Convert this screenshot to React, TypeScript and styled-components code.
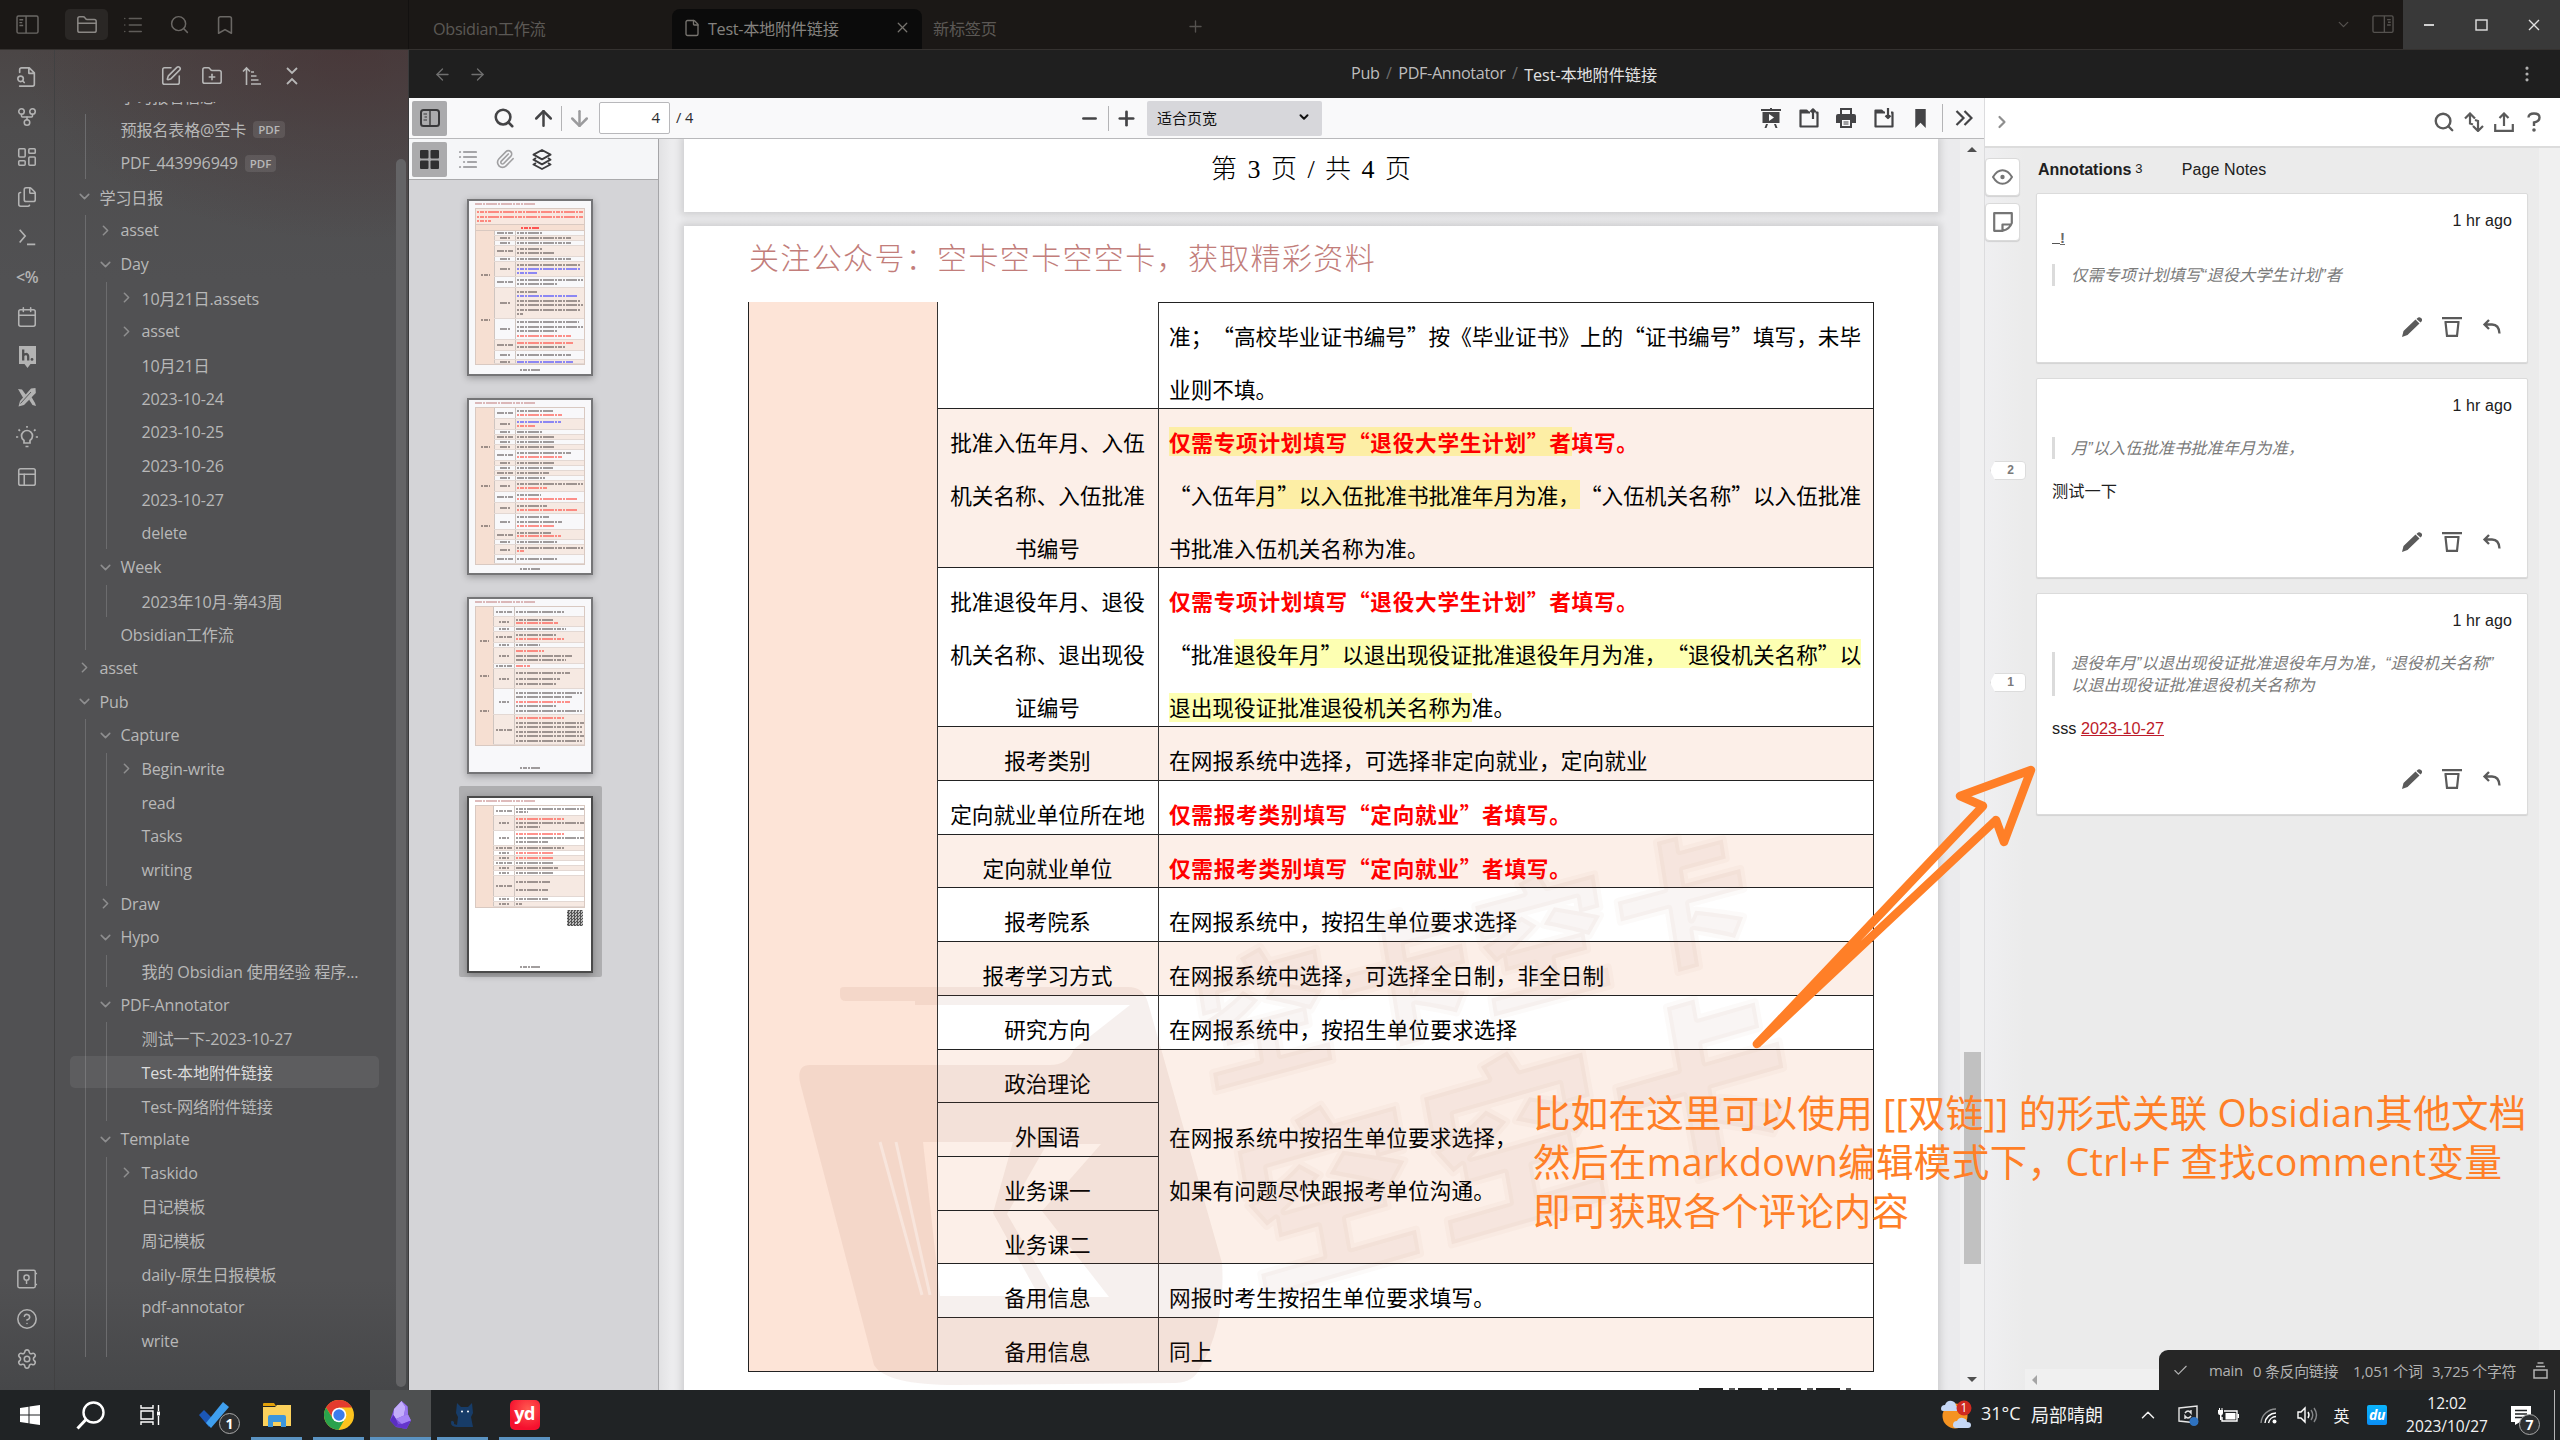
import React from 'react';
import styled, { createGlobalStyle, css } from 'styled-components';
import {
  FolderClosed, List, Search, Bookmark, File, X, Plus, ChevronDown, ChevronRight, ArrowLeft, ArrowRight, ArrowUp, ArrowDown,
  SquarePen, FolderPlus, GitFork, LayoutDashboard, Files, Calendar, PanelsTopLeft,
  CircleHelp, Settings, Paperclip, Check, MoreVertical, Minus, ChevronUp,
} from 'lucide-react';

const UI = `'Open Sans', 'Noto Sans CJK SC', sans-serif`;
const ARIAL = `'Liberation Sans', 'Noto Sans CJK SC', sans-serif`;
const DOC = `'Noto Sans CJK SC', sans-serif`;
const ORANGE = '#ff7f27';

const Global = createGlobalStyle`
  html, body { margin: 0; padding: 0; background: #202325; }
  * { box-sizing: border-box; }
  body { font-family: ${UI}; text-spacing-trim: space-all; text-autospace: no-autospace; overflow: hidden; }
  svg { display: block; flex: none; }
`;

/* ---------- shared pieces ---------- */

const Screen = styled.div`
  position: relative;
  width: 2560px;
  height: 1440px;
  display: flex;
  flex-direction: column;
  overflow: hidden;
`;

const Slot = styled.div<{ $w: number; $ml?: number; $h?: number; $bg?: string; $c?: string; $r?: number }>`
  flex: none;
  display: flex;
  align-items: center;
  justify-content: center;
  width: ${p => p.$w}px;
  height: ${p => (p.$h ? `${p.$h}px` : 'auto')};
  margin-left: ${p => p.$ml ?? 0}px;
  background: ${p => p.$bg ?? 'transparent'};
  border-radius: ${p => p.$r ?? 0}px;
  color: ${p => p.$c ?? 'inherit'};
`;

const Divider = styled.div<{ $h: number; $ml?: number }>`
  flex: none;
  width: 1px;
  height: ${p => p.$h}px;
  margin-left: ${p => p.$ml ?? 0}px;
  background: #b4b4b6;
`;

const Spacer = styled.div`flex: 1;`;

/* ---------- window title bar ---------- */

const TitleBar = styled.header`
  flex: none;
  height: 50px;
  display: flex;
  background: #1b1816;
  border-bottom: 1px solid #353230;
  color: #55524f;
`;

const TitleLeft = styled.div`
  width: 409px;
  display: flex;
  align-items: center;
  border-right: 1px solid #131110;
`;

const Tabs = styled.div`
  flex: 1;
  display: flex;
  align-items: flex-end;
  font-size: 16.2px;
`;

const Tab = styled.div<{ $w: number; $pad: number; $active?: boolean }>`
  width: ${p => p.$w}px;
  height: 40px;
  display: flex;
  align-items: center;
  padding: 0 0 3px ${p => p.$pad}px;
  letter-spacing: -0.3px;
  white-space: nowrap;
  color: ${p => (p.$active ? '#85827f' : '#5b5855')};
  background: ${p => (p.$active ? '#0b0b0b' : 'transparent')};
  border-radius: 8px 8px 0 0;
  svg { color: ${p => (p.$active ? '#77746f' : 'inherit')}; }
`;

const TabLabel = styled.span`margin-left: 7px; flex: 1;`;

const WindowControls = styled.div`
  width: 157px;
  height: 49px;
  display: flex;
  align-items: center;
  background: #393939;
  color: #dedede;
`;

const PanelIcon = ({ flip, s = 23, c = 'currentColor' }: { flip?: boolean; s?: number; c?: string }) => (
  <svg width={s} height={s * 0.83} viewBox="0 0 24 20" fill="none" stroke={c} strokeWidth="1.5" transform={flip ? 'scale(-1 1)' : undefined}>
    <rect x="1" y="1" width="22" height="18" rx="1.5" />
    <path d="M10.5 1v18M3.5 5h4M3.5 8h3M3.5 11h4" />
  </svg>
);

/* ---------- workspace ---------- */

const Workspace = styled.div`
  flex: none;
  height: 1340px;
  display: flex;
`;

const LeftDock = styled.div`
  width: 409px;
  display: flex;
  background:
    radial-gradient(ellipse 330px 190px at 350px 0, rgba(70, 48, 50, 0.62), transparent),
    linear-gradient(180deg, #4b4646 0, #4e4d4e 80px, #515153 230px, #515153 1230px, #464749 1340px);
  border-right: 1px solid #3a3a3b;
  color: #b7b7b7;
`;

const Ribbon = styled.nav`
  width: 55px;
  padding: 6.5px 0 11px;
  display: flex;
  flex-direction: column;
  border-right: 1px solid #414142;
  color: #b3b3b3;
`;

const RibbonButton = styled.div`
  height: 40px;
  display: flex;
  align-items: center;
  justify-content: center;
  font: 600 16px ${UI};
  letter-spacing: -0.5px;
`;

const Explorer = styled.div`
  flex: 1;
  display: flex;
  flex-direction: column;
  padding-left: 15px;
`;

const ExplorerTools = styled.div`
  height: 52px;
  display: flex;
  align-items: center;
  padding-left: 81px;
`;

const ExplorerBody = styled.div`
  flex: 1;
  display: flex;
  justify-content: space-between;
  overflow: hidden;
`;

const Tree = styled.div`
  width: 309px;
  overflow: hidden;
`;

const ExplorerScroll = styled.div`
  width: 10px;
  height: 1228px;
  margin: 57px 2px 0 0;
  border-radius: 5px;
  background: #646466;
`;

const Row = styled.div<{ $depth: number; $selected?: boolean }>`
  height: 31.67px;
  margin-bottom: 2px;
  margin-left: ${p => -21 * p.$depth}px;
  padding-left: ${p => 7.5 + 21 * p.$depth}px;
  display: flex;
  align-items: center;
  font-size: 16.1px;
  letter-spacing: -0.18px;
  white-space: nowrap;
  border-radius: 5px;
  color: ${p => (p.$selected ? '#dcdcdc' : '#b8b8b8')};
  background: ${p => (p.$selected ? 'rgba(255,255,255,0.075)' : 'transparent')};
`;

const ClippedRow = styled(Row)`margin-top: -22px;`;

const Chevron = styled.div`
  width: 14px;
  margin-right: 8px;
  color: #8e8e8f;
  display: flex;
  justify-content: center;
`;

const Group = styled.div`
  margin-left: 15px;
  padding-left: 5px;
  border-left: 1px solid #6c6c6e;
  margin-bottom: 2px;
  > *:last-child { margin-bottom: 0; }
`;

const FirstGroup = styled(Group)`margin-top: 1.5px;`;

const Badge = styled.span`
  margin-left: 7px;
  padding: 0 5px;
  height: 17px;
  line-height: 17px;
  border-radius: 4px;
  background: rgba(255, 255, 255, 0.1);
  font-size: 11.5px;
  font-weight: 600;
  letter-spacing: 0;
`;

type Node = { name: string; open?: boolean; closed?: boolean; pdf?: boolean; selected?: boolean; kids?: Node[] };

const leaf = (name: string): Node => ({ name });

const tree: Node[] = [
  {
    name: '学习日报', open: true, kids: [
      { name: 'asset', closed: true },
      {
        name: 'Day', open: true, kids: [
          { name: '10月21日.assets', closed: true },
          { name: 'asset', closed: true },
          leaf('10月21日'), leaf('2023-10-24'), leaf('2023-10-25'), leaf('2023-10-26'), leaf('2023-10-27'), leaf('delete'),
        ],
      },
      { name: 'Week', open: true, kids: [leaf('2023年10月-第43周')] },
      leaf('Obsidian工作流'),
    ],
  },
  { name: 'asset', closed: true },
  {
    name: 'Pub', open: true, kids: [
      { name: 'Capture', open: true, kids: [{ name: 'Begin-write', closed: true }, leaf('read'), leaf('Tasks'), leaf('writing')] },
      { name: 'Draw', closed: true },
      { name: 'Hypo', open: true, kids: [leaf('我的 Obsidian 使用经验 程序...')] },
      {
        name: 'PDF-Annotator', open: true, kids: [
          leaf('测试一下-2023-10-27'), { name: 'Test-本地附件链接', selected: true }, leaf('Test-网络附件链接'),
        ],
      },
      {
        name: 'Template', open: true, kids: [
          { name: 'Taskido', closed: true }, leaf('日记模板'), leaf('周记模板'), leaf('daily-原生日报模板'), leaf('pdf-annotator'), leaf('write'),
        ],
      },
    ],
  },
];

const TreeNode = ({ node, depth }: { node: Node; depth: number }) => (
  <>
    <Row $depth={depth} $selected={node.selected}>
      <Chevron>
        {node.open && <ChevronDown size={17} strokeWidth={2.2} />}
        {node.closed && <ChevronRight size={17} strokeWidth={2.2} />}
      </Chevron>
      {node.name}
      {node.pdf && <Badge>PDF</Badge>}
    </Row>
    {node.kids && (
      <Group>
        {node.kids.map(k => <TreeNode key={k.name} node={k} depth={depth + 1} />)}
      </Group>
    )}
  </>
);

/* ribbon glyphs */

const FileFindGlyph = () => (
  <svg width="22" height="22" viewBox="0 0 24 24" fill="none" stroke="currentColor" strokeWidth="1.8" strokeLinecap="round" strokeLinejoin="round">
    <path d="M4 22h14a2 2 0 0 0 2-2V7.5L14.500 2H6a2 2 0 0 0-2 2v3M14 2v6h6" /><circle cx="5" cy="14" r="3" /><path d="M9 18l-1.500-1.500" />
  </svg>
);
const TerminalGlyph = () => (
  <svg width="22" height="22" viewBox="0 0 24 24" fill="none" stroke="currentColor" strokeWidth="1.8"><path d="M4 4l6 7-6 7M12 20h9" /></svg>
);
const HypothesisGlyph = () => (
  <svg width="19" height="22" viewBox="0 0 19 22">
    <path d="M1 0h17v18h-5.500L9.500 22 6.500 18H1z" fill="#b3b3b3" />
    <path d="M5.200 3.500v11M5.200 10c.6-2.400 5-3 5 .4v4" stroke="#4f4f50" strokeWidth="2.300" fill="none" />
    <circle cx="14" cy="13.400" r="1.400" fill="#4f4f50" />
  </svg>
);
const SketchGlyph = () => (
  <svg width="20" height="20" viewBox="0 0 20 20" fill="#b3b3b3">
    <path d="M1 2l4 .5 4.500 6-3 3zM12 12.500l2.500-2.500L18 16l1 3-3.500-1z" />
    <path d="M18.500 1l.3 5L7 18l-5.500 1.500L3 14 14 1.500z" />
    <path d="M3.500 16.500L14 5" stroke="#515153" strokeWidth="0.9" />
  </svg>
);
const VaultGlyph = () => (
  <svg width="22" height="22" viewBox="0 0 24 24" fill="none" stroke="currentColor" strokeWidth="1.600">
    <rect x="2" y="2.500" width="19" height="19" rx="1.500" /><circle cx="11.500" cy="10.500" r="2.800" /><path d="M11.500 13.500v4M21 6h2M21 18h2" />
  </svg>
);
const BulbGlyph = () => (
  <svg width="24" height="24" viewBox="0 0 24 24" fill="none" stroke="currentColor" strokeWidth="1.700">
    <path d="M9 18v-2.500C7 14 6.500 12.500 6.500 11a5.500 5.500 0 0 1 11 0c0 1.500-.5 3-2.500 4.500V18zM10.500 21.500h3M12 1v1.800M1 12h2.200M20.800 12H23M3.500 4.500L5 5.800M20.500 4.500L19 5.800" />
  </svg>
);
const SortGlyph = () => (
  <svg width="20" height="20" viewBox="0 0 20 20" fill="none" stroke="currentColor" strokeWidth="1.600">
    <path d="M4.500 19V2M1 5.500L4.500 2 8 5.500M9 6h3M9 10h5.500M9 14h7.500M9 18h10" />
  </svg>
);
const CollapseGlyph = () => (
  <svg width="12" height="20" viewBox="0 0 12 20" fill="none" stroke="currentColor" strokeWidth="1.800"><path d="M1 2l5 5 5-5M1 18l5-5 5 5" /></svg>
);

/* ---------- main pane ---------- */

const MainPane = styled.main`
  width: 2151px;
  display: flex;
  flex-direction: column;
`;

const ViewHeader = styled.div`
  flex: none;
  height: 48px;
  display: flex;
  align-items: center;
  background: #1f1f1f;
  color: #707070;
`;

const Crumbs = styled.div`
  width: 306px;
  display: flex;
  justify-content: space-between;
  font-size: 16.200px;
  letter-spacing: -0.350px;
  color: #bdbdbd;
  white-space: nowrap;
  i { font-style: normal; color: #6d6d6d; }
  b { font-weight: 400; letter-spacing: -0.100px; color: #e2e2e2; }
`;

const PaneBody = styled.div`
  flex: 1;
  display: flex;
  min-height: 0;
`;

const PdfApp = styled.section`
  width: 1576px;
  display: flex;
  flex-direction: column;
  border-right: 1px solid #dcdcde;
`;

const PdfToolbar = styled.div`
  flex: none;
  height: 41px;
  display: flex;
  align-items: center;
  background: #f9f9fa;
  border-bottom: 1px solid #b9b9bb;
  color: #444446;
  font-family: ${UI};
`;

const PageInput = styled.div`
  width: 71px;
  height: 32px;
  margin-left: 2px;
  padding-right: 9px;
  border: 1px solid #b8b8bb;
  border-radius: 2px;
  background: #fff;
  text-align: right;
  font-size: 15px;
  line-height: 29px;
  color: #2c2c2e;
`;

const PageCount = styled.span`
  width: 40px;
  margin-left: 6px;
  padding-bottom: 1px;
  font-size: 14.500px;
  color: #2c2c2e;
`;

const ZoomSelect = styled.div`
  width: 175px;
  height: 35px;
  margin-left: 3px;
  padding: 0 11px 2px 10px;
  display: flex;
  align-items: center;
  justify-content: space-between;
  border-radius: 2px;
  background: #d7d7db;
  font-size: 15px;
  color: #111;
`;

const PdfBody = styled.div`
  flex: 1;
  display: flex;
  min-height: 0;
`;

const ThumbPane = styled.aside`
  width: 250px;
  display: flex;
  flex-direction: column;
  background: #d4d4d7;
  border-right: 1px solid #a5a5a8;
`;

const ThumbTools = styled.div`
  flex: none;
  height: 41px;
  display: flex;
  align-items: center;
  background: #f5f6f8;
  border-bottom: 1px solid #aaaaac;
  color: #a0a0a2;
`;

const ThumbList = styled.div`
  padding: 9px 0 0 50px;
`;

const ThumbSlot = styled.div<{ $selected?: boolean }>`
  width: 143px;
  height: 191px;
  margin-bottom: 8px;
  padding: 11px 8px;
  border-radius: 2px;
  background: ${p => (p.$selected ? '#aeaeb0' : 'transparent')};
`;

const ThumbSheet = styled.div<{ $selected?: boolean }>`
  width: 126px;
  height: 177px;
  margin-top: -1px;
  padding: 2px 6px;
  border: 2px solid ${p => (p.$selected ? '#4a4a4a' : '#757577')};
  background: ${p => (p.$selected ? '#fff' : '#f8f8fa')};
  box-shadow: 0 2px 7px rgba(0, 0, 0, 0.3);
  display: flex;
  flex-direction: column;
  overflow: hidden;
`;

const dash = (color: string) => css`
  height: 2px;
  background: repeating-linear-gradient(90deg, ${color} 0 2.500px, transparent 2.500px 3px, ${color} 3px 7px, transparent 7px 7.600px);
`;

const Stripe = styled.div<{ $w: number; $color: string }>`
  ${p => dash(p.$color)}
  width: ${p => p.$w}px;
  flex: none;
`;

const MiniTable = styled.div<{ $joined?: boolean }>`
  margin-top: ${p => (p.$joined ? 0 : 3)}px;
  width: 110px;
  display: flex;
  border: 1px solid #d9c9c1;
  ${p => p.$joined && css`border-top: 0;`}
`;

const MiniIntro = styled.div`
  width: 110px;
  height: 17px;
  margin-top: 3px;
  padding: 2px 1px;
  display: flex;
  flex-direction: column;
  justify-content: space-between;
  border: 1px solid #d9c9c1;
  background: #f8e8e0;
`;

const MiniHeading = styled.div`
  width: 110px;
  height: 6px;
  display: flex;
  align-items: center;
  justify-content: center;
  background: #f6dfd2;
  border: solid #d9c9c1;
  border-width: 0 1px 1px;
`;

const MiniSide = styled.div`
  width: 18px;
  background: #f6dfd2;
  display: flex;
  flex-direction: column;
  align-items: center;
  justify-content: space-evenly;
`;

const MiniRows = styled.div`flex: 1;`;

const MiniRow = styled.div<{ $h: number; $tint: boolean }>`
  height: ${p => p.$h}px;
  display: flex;
  background: ${p => (p.$tint ? '#f6e9e2' : 'transparent')};
  border-bottom: 1px solid #e3d8d3;
`;

const MiniLabel = styled.div`
  width: 22px;
  display: flex;
  flex-direction: column;
  justify-content: center;
  align-items: center;
  border-right: 1px solid #cfc5c0;
  border-left: 1px solid #cfc5c0;
`;

const MiniLines = styled.div`
  flex: 1;
  padding-left: 1px;
  display: flex;
  flex-direction: column;
  justify-content: space-evenly;
`;

const MiniQr = styled.div`
  width: 16px;
  height: 16px;
  margin: 2px 2px 0 auto;
  background: repeating-conic-gradient(#555 0 25%, #bbb 0 50%) 0 0 / 3px 3px;
`;

const MiniFoot = styled.div`
  margin: auto auto 1px;
`;

/* each row: height, then one letter per text line (k = black, r = red, b = blue) with its width */
type Mini = { h: number; lines: [string, number][]; tint?: boolean };
const ink: Record<string, string> = { k: 'rgba(70,62,62,.5)', r: 'rgba(255,80,70,.62)', b: 'rgba(70,70,255,.6)' };

const mini = (spec: string): Mini[] =>
  spec.split(' ').map((s, i) => {
    const [h, ...ls] = s.split(',');
    return { h: Number(h), tint: i % 2 === 1, lines: ls.map(l => [l[0], Number(l.slice(1))] as [string, number]) };
  });

const thumbs: { intro?: boolean; side: number; rows: Mini[]; qr?: boolean }[] = [
  { intro: true, side: 2, rows: mini('5,k25 5,k54 5,k54 11,k25,k38 5,k54 15,k64,b64,b20 11,k66,k40 31,k20,b60,k64,k66,k64,k6 21,k62,k66,k40,r54 11,r56,k48 9,k54 4,b56') },
  { side: 3, rows: mini('11,k36,r46 11,b44,r18 5,k26 5,k38 5,k38 5,k38 11,k54,r46 5,k38 5,k36 5,k32 5,k28 11,k66,r30 11,k24,r60 11,k30,r60 16,k32,k46,r38 10,k34,r44 5,k40 10,k66,r8 9,k40') },
  { side: 3, rows: mini('10,k48 10,k38,r42 5,k50 11,k40,r48 5,k24 16,r28,k56,k50 5,r14 20,k54,k44,k40 26,k66,k56,r54,k40,k66 30,r48,k68,k66,k66,k68,k66') },
  { side: 0, qr: true, rows: mini('10,k68,k12 15,r48,k68,k24 15,r48,k68,k32 5,k48 5,r38 5,r38 5,k38 5,k42 5,k38 21,k34,k32 5,k32 5,k6') },
];

const Thumb = ({ data, selected }: { data: (typeof thumbs)[number]; selected?: boolean }) => (
  <ThumbSlot $selected={selected}>
    <ThumbSheet $selected={selected}>
      <Stripe $w={61} $color="rgba(190,120,120,.5)" />
      {data.intro && (
        <>
          <MiniIntro>
            <Stripe $w={106} $color={ink.r} />
            <Stripe $w={106} $color={ink.r} />
            <Stripe $w={14} $color={ink.r} />
          </MiniIntro>
          <MiniHeading><Stripe $w={18} $color="rgba(255,60,60,.85)" /></MiniHeading>
        </>
      )}
      <MiniTable $joined={data.intro}>
        <MiniSide>
          {Array.from({ length: data.side }, (_, i) => <Stripe key={i} $w={9} $color={ink.k} />)}
        </MiniSide>
        <MiniRows>
          {data.rows.map((r, i) => (
            <MiniRow key={i} $h={r.h} $tint={!!r.tint}>
              <MiniLabel><Stripe $w={i % 3 ? 10 : 16} $color={ink.k} /></MiniLabel>
              <MiniLines>
                {r.lines.map((l, j) => <Stripe key={j} $w={l[1]} $color={ink[l[0]]} />)}
              </MiniLines>
            </MiniRow>
          ))}
        </MiniRows>
      </MiniTable>
      {data.qr && <MiniQr />}
      <MiniFoot><Stripe $w={20} $color={ink.k} /></MiniFoot>
    </ThumbSheet>
  </ThumbSlot>
);

/* ---------- document ---------- */

const Viewer = styled.div`
  flex: 1;
  display: flex;
  background: linear-gradient(90deg, #e2e2e4 0, #ececee 12px, #ebebed 100%);
`;

const Pages = styled.div`
  width: 1301px;
  padding-left: 25px;
  height: 1251px;
  overflow: hidden;
`;

const PageSheet = styled.div<{ $h: number; $mt?: number }>`
  position: relative;
  width: 1254px;
  height: ${p => p.$h}px;
  margin-top: ${p => p.$mt ?? 0}px;
  background: #fff;
  box-shadow: 0 0 7px 3px rgba(0, 0, 0, 0.12);
`;

const PageFooter = styled.div`
  padding-top: 12px;
  text-align: center;
  font: 300 26px/38px 'Liberation Serif', 'Noto Sans CJK SC', serif;
  word-spacing: 4px;
  color: #000;
`;

const PageTitle = styled.div`
  padding: 7px 0 0 65px;
  font: 300 30px/46px ${DOC};
  letter-spacing: 1.350px;
  color: #c27d7a;
  white-space: nowrap;
`;

const Sheet = styled.div`
  margin: 23px 0 0 64px;
  width: 1126px;
  display: grid;
  grid-template-columns: 189px 221px 716px;
  font: 400 21.630px/53.100px ${DOC};
  color: #000;
  white-space: nowrap;
`;

const SideCell = styled.div`
  background: #fde4d7;
  border-left: 1px solid #222;
  border-bottom: 1px solid #222;
`;

const Column = styled.div<{ $first?: boolean }>`
  display: flex;
  flex-direction: column;
  border-left: 1px solid #333;
  ${p => !p.$first && css`border-right: 1px solid #222; border-top: 1px solid #222;`}
`;

const Cell = styled.div<{ $h: number; $tint?: boolean; $center?: boolean; $pt?: number; $ls?: number }>`
  height: ${p => p.$h}px;
  padding: ${p => p.$pt ?? 6.2}px ${p => (p.$center ? 1 : 0)}px 0 ${p => (p.$center ? 0 : 10)}px;
  text-align: ${p => (p.$center ? 'center' : 'left')};
  letter-spacing: ${p => p.$ls ?? 0}px;
  background: ${p => (p.$tint ? '#fcefe8' : '#fff')};
  border-bottom: 1px solid #222;
`;

const Line = styled.div``;

const Red = styled.span`
  color: #f00;
  font-weight: 700;
  letter-spacing: 0.740px;
`;

const Mark = styled.span<{ $c?: string }>`
  background: linear-gradient(${p => p.$c ?? '#fdffb2'}, ${p => p.$c ?? '#fdffb2'}) 0 60% / 100% 29px no-repeat;
`;

const warm = '#fdeea5';

const labels: { h: number; lines: string[] }[] = [
  { h: 107, lines: [] },
  { h: 159, lines: ['批准入伍年月、入伍', '机关名称、入伍批准', '书编号'] },
  { h: 159, lines: ['批准退役年月、退役', '机关名称、退出现役', '证编号'] },
  { h: 54, lines: ['报考类别'] },
  { h: 54, lines: ['定向就业单位所在地'] },
  { h: 53, lines: ['定向就业单位'] },
  { h: 54, lines: ['报考院系'] },
  { h: 54, lines: ['报考学习方式'] },
  { h: 54, lines: ['研究方向'] },
  { h: 53, lines: ['政治理论'] },
  { h: 54, lines: ['外国语'] },
  { h: 54, lines: ['业务课一'] },
  { h: 53, lines: ['业务课二'] },
  { h: 54, lines: ['备用信息'] },
  { h: 54, lines: ['备用信息'] },
];
const tinted = [1, 3, 5, 7, 9, 10, 11, 12, 14];

const Overlay = styled.svg`
  position: absolute;
  left: 0;
  top: 0;
  pointer-events: none;
`;

const Watermark = () => (
  <Overlay width="1254" height="1170" viewBox="684 226 1254 1170">
    <path
      fill="rgba(150,80,60,0.085)"
      fillRule="evenodd"
      d="M840 990q0-3 4-3h284q16 0 20 16l74 260q4 60-22 105-6 14-24 15l-220 2q-70 0-82-20L802 1090q-8-25 8-25h240q18 0 24-16l56-44H915v-4H846q-6 0-6-6z
         M923 1142h90l-20 71 46 83h-99z M1047 1144h54l-59 67 67 86h-54l-48-83z"
    />
    <path d="M880 1142l42 153M896 1142l34 153" stroke="rgba(255,255,255,.35)" strokeWidth="3" />
    <g fontFamily="Noto Sans CJK SC" fontWeight="900" fill="rgba(150,80,60,0.06)" stroke="rgba(150,80,60,0.03)" strokeWidth="8" strokeLinejoin="round" paintOrder="stroke">
      <text transform="translate(1206 1085) rotate(-15) skewX(-6)" fontSize="138" letterSpacing="6">空卡空卡</text>
      <text transform="translate(1252 1290) rotate(-16) skewX(-6)" fontSize="184" letterSpacing="10">空空卡</text>
    </g>
  </Overlay>
);

const CodeCaption = styled.div`
  width: 152px;
  height: 4px;
  margin: 16px 0 0 1015px;
  background: repeating-linear-gradient(90deg, #222 0 24px, #fff 24px 30px, #555 30px 36px, #fff 36px 39px);
`;

const ScrollTrack = styled.div`
  width: 24px;
  display: flex;
  flex-direction: column;
  align-items: center;
  background: #f0f0f1;
  padding: 8px 0 8px;
`;

const ScrollThumb = styled.div`
  width: 17px;
  height: 212px;
  margin-left: 1px;
  background: #c1c1c1;
`;

const Document = () => (
  <Pages>
    <PageSheet $h={73}>
      <PageFooter>第 3 页 / 共 4 页</PageFooter>
    </PageSheet>
    <PageSheet $h={1230} $mt={14}>
      <PageTitle>关注公众号：空卡空卡空空卡，获取精彩资料</PageTitle>
      <Sheet>
        <SideCell />
        <Column $first>
          {labels.map((l, i) => (
            <Cell key={i} $h={l.h} $center $tint={tinted.includes(i)}>
              {l.lines.map(t => <Line key={t}>{t}</Line>)}
            </Cell>
          ))}
        </Column>
        <Column>
          <Cell $h={106}>
            <Line>准；“高校毕业证书编号”按《毕业证书》上的“证书编号”填写，未毕</Line>
            <Line>业则不填。</Line>
          </Cell>
          <Cell $h={159} $tint>
            <Line><Red><Mark $c={warm}>仅需专项计划填写“退役大学生计划”者</Mark>填写。</Red></Line>
            <Line>“入伍年<Mark $c={warm}>月”以入伍批准书批准年月为准，</Mark>“入伍机关名称”以入伍批准</Line>
            <Line>书批准入伍机关名称为准。</Line>
          </Cell>
          <Cell $h={159}>
            <Line><Red>仅需专项计划填写“退役大学生计划”者填写。</Red></Line>
            <Line>“批准<Mark>退役年月”以退出现役证批准退役年月为准，“退役机关名称”以</Mark></Line>
            <Line><Mark>退出现役证批准退役机关名称为</Mark>准。</Line>
          </Cell>
          <Cell $h={54} $tint $ls={0.14}>在网报系统中选择，可选择非定向就业，定向就业</Cell>
          <Cell $h={54}><Red>仅需报考类别填写“定向就业”者填写。</Red></Cell>
          <Cell $h={53} $tint><Red>仅需报考类别填写“定向就业”者填写。</Red></Cell>
          <Cell $h={54} $ls={0.14}>在网报系统中，按招生单位要求选择</Cell>
          <Cell $h={54} $tint $ls={0.14}>在网报系统中选择，可选择全日制，非全日制</Cell>
          <Cell $h={54} $ls={0.14}>在网报系统中，按招生单位要求选择</Cell>
          <Cell $h={214} $tint $pt={60.2} $ls={0.1}>
            <Line>在网报系统中按招生单位要求选择，</Line>
            <Line>如果有问题尽快跟报考单位沟通。</Line>
          </Cell>
          <Cell $h={54} $ls={0.1}>网报时考生按招生单位要求填写。</Cell>
          <Cell $h={54} $tint>同上</Cell>
        </Column>
      </Sheet>
      <CodeCaption />
      <Watermark />
    </PageSheet>
  </Pages>
);

/* pdf toolbar glyphs */

const Glyph = ({ d, w = 20, fill }: { d: string; w?: number; fill?: boolean }) => (
  <svg width={w} height={w} viewBox="0 0 20 20" fill={fill ? 'currentColor' : 'none'} stroke={fill ? 'none' : 'currentColor'} strokeWidth="2.200" strokeLinejoin="round" fillRule="evenodd">
    <path d={d} />
  </svg>
);

const PRESENT = 'M0 1h9V0h2v1h9v2H0zM1.500 4h17v11h-17zM8 6v7l5-3.500zM6 16l-2 4M5 16h2l-1.500 4h-2zM13 16h2l1.500 4h-2z';
const OPEN = 'M11 4.500H1.500M16.500 4.500h2v14h-17v-16H7.500l2 2M14 11V1.500M11.500 4L14 1.300l2.500 2.700';
const SAVE = 'M11 4.500H1.500M17 4.500h1.500v14h-17v-16H7.500l2 2M14 0v10M11.500 7.500L14 10l2.500-2.500';
const PRINT = 'M4 0h12v6h2q2 0 2 2v7h-4v5H4v-5H0V8q0-2 2-2h2zM6 2v4h8V2zM6 12v6h8v-6zM7.500 13.500h5v1h-5zM7.500 15.500h5v1h-5z';
const FLAG = 'M4.500 0h11v20L10 14.500 4.500 20z';

const GridGlyph = () => (
  <svg width="19" height="19" viewBox="0 0 19 19" fill="#2f2f31">
    <rect width="8.500" height="8.500" rx="1" /><rect x="10.500" width="8.500" height="8.500" rx="1" />
    <rect y="10.500" width="8.500" height="8.500" rx="1" /><rect x="10.500" y="10.500" width="8.500" height="8.500" rx="1" />
  </svg>
);
const OutlineGlyph = () => (
  <svg width="18" height="19" viewBox="0 0 18 19" stroke="#a5a5a8" strokeWidth="2.200" strokeLinecap="round"><path d="M1 2h.1M5 2h12M1 7h.1M5 7h12M5 12h.1M9 12h8M1 17h.1M5 17h12" /></svg>
);
const LayersGlyph = () => (
  <svg width="20" height="21" viewBox="0 0 20 21" fill="none" stroke="#3c3c3e" strokeWidth="1.900" strokeLinejoin="round">
    <path d="M10 1l8.500 4.700L10 10.400 1.500 5.700zM4 9l-2.500 1.700L10 15.400l8.500-4.700L16 9M4 14l-2.500 1.500L10 20l8.500-4.500L16 14" />
  </svg>
);

/* ---------- annotation sidebar ---------- */

const NotesPane = styled.aside`
  flex: 1;
  display: flex;
  flex-direction: column;
  background: linear-gradient(90deg, #efeff1 0, #ebebeb 40px);
  font-family: ${ARIAL};
  color: #202020;
`;

const NotesTop = styled.div`
  flex: none;
  height: 50px;
  display: flex;
  align-items: center;
  padding-right: 11px;
  background: #fff;
  border-bottom: 2px solid #dcdcdc;
  color: #5a5a5a;
`;

const NotesBody = styled.div`
  flex: 1;
  display: flex;
`;

const BucketBar = styled.div`
  width: 51px;
  padding-top: 10px;
`;

const BarButton = styled.div`
  width: 35px;
  height: 38px;
  margin-bottom: 7px;
  display: flex;
  align-items: center;
  justify-content: center;
  background: #fff;
  border: 1px solid #dadada;
  border-radius: 4px;
  box-shadow: 0 1px 1px rgba(0, 0, 0, 0.12);
  color: #757575;
`;

const Bucket = styled.div<{ $mt: number }>`
  width: 36px;
  height: 19px;
  margin: ${p => p.$mt}px 0 0 5px;
  padding-left: 5px;
  clip-path: polygon(0 50%, 5px 0, 100% 0, 100% 100%, 5px 100%);
  background: #fff;
  border: 1px solid #dcdcdc;
  border-radius: 4px;
  text-align: center;
  font: 700 12px/17px ${ARIAL};
  color: #7a7a7a;
`;

const Threads = styled.div`
  width: 492px;
`;

const TabRow = styled.div`
  height: 45px;
  padding: 0 0 1px 2px;
  display: flex;
  align-items: center;
  font-size: 16px;
  letter-spacing: 0.1px;
  b { letter-spacing: 0; }
  sup { font-size: 13px; margin: -4px 0 0 4px; vertical-align: baseline; }
  span { margin-left: 39px; }
`;

const Card = styled.article<{ $h: number }>`
  height: ${p => p.$h}px;
  margin-bottom: 15px;
  padding: 16px 15px 0;
  display: flex;
  flex-direction: column;
  background: #fff;
  border: 1px solid #dbdbdb;
  border-radius: 2px;
  box-shadow: 0 1px 1px rgba(0, 0, 0, 0.1);
`;

const When = styled.div`
  height: 22px;
  line-height: 22px;
  text-align: right;
  font-size: 16px;
  letter-spacing: 0.1px;
`;

const Author = styled.div`
  height: 13px;
  margin-top: -1px;
  font: 700 15px/13px ${ARIAL};
  color: #6a6a6a;
  display: flex;
  i { width: 8px; height: 13px; border-bottom: 1px solid #555; }
  u { text-underline-offset: 1px; }
`;

const Quote = styled.blockquote`
  margin: 20px 0 0;
  padding-left: 16px;
  border-left: 3px solid #dbdbdb;
  font-size: 16.250px;
  line-height: 22px;
  font-style: italic;
  color: #7a7a7a;
  white-space: nowrap;
`;

const Comment = styled.div`
  margin-top: 20px;
  font-size: 16.250px;
  line-height: 24px;
  u { color: #bd1c2b; }
`;

const Actions = styled.div`
  margin: auto 10px 25px auto;
  display: flex;
  align-items: center;
  gap: 20px;
  color: #5a5a5a;
`;

const PencilGlyph = () => (
  <svg width="20" height="20" viewBox="0 0 20 20" fill="currentColor"><path d="M0 20l1.500-6L13.500 2.500l4 4L5.500 18zM15 1.500q2-2 4-.5t.5 3.500l-1 1-4-3.500z" /></svg>
);
const BinGlyph = () => (
  <svg width="20" height="20" viewBox="0 0 20 20" fill="none" stroke="currentColor" strokeWidth="2.200"><path d="M0 1.200h20M2.500 5h15M3.500 5l1.500 13.800h10L16.500 5" /></svg>
);
const ReplyGlyph = () => (
  <svg width="20" height="20" viewBox="0 0 20 20" fill="none" stroke="currentColor" strokeWidth="2.300"><path d="M7 3L2.500 7.500 7 12M2.500 7.500H10q7 0 7.500 9" /></svg>
);

const CardActions = () => (
  <Actions><PencilGlyph /><BinGlyph /><ReplyGlyph /></Actions>
);

const SideScroll = styled.div`
  width: 21px;
  margin-left: auto;
  background: #f0f0f0;
`;

const BottomScroll = styled.div`
  height: 21px;
  margin-left: 40px;
  padding-left: 7px;
  display: flex;
  align-items: center;
  background: #f0f0f0;
`;

const StatusBar = styled.div`
  position: absolute;
  right: 0;
  top: 1350px;
  width: 401px;
  height: 40px;
  padding: 0 11px 0 13px;
  display: flex;
  align-items: center;
  border-radius: 9px 0 0 0;
  background: #262626;
  font-size: 14.900px;
  letter-spacing: -0.250px;
  color: #b3b3b3;
  white-space: nowrap;
`;

const StatusItem = styled.span<{ $w: number }>`width: ${p => p.$w}px;`;

/* ---------- handwritten notes over the window ---------- */

const Callout = styled.div`
  position: absolute;
  left: 1533px;
  top: 1088px;
  font: 400 37.500px/49px ${UI};
  color: ${ORANGE};
  white-space: nowrap;
`;

const CalloutLine = styled.div<{ $ls: number }>`letter-spacing: ${p => p.$ls}px;`;

/* ---------- taskbar ---------- */

const Taskbar = styled.footer`
  flex: none;
  height: 50px;
  display: flex;
  align-items: center;
  background: #202325;
  color: #f2f2f2;
`;

const AppButton = styled.div<{ $w: number; $ml?: number; $active?: boolean; $running?: boolean }>`
  position: relative;
  width: ${p => p.$w}px;
  height: 50px;
  margin-left: ${p => p.$ml ?? 0}px;
  display: flex;
  align-items: center;
  justify-content: center;
  background: ${p => (p.$active ? '#4e5051' : 'transparent')};
  border-bottom: ${p => (p.$running ? '3px solid #5a93c2' : '0')};
  padding-top: ${p => (p.$running ? 3 : 0)}px;
`;

const CountBadge = styled.span<{ $x: number; $y: number }>`
  position: absolute;
  left: ${p => p.$x}px;
  top: ${p => p.$y}px;
  width: 21px;
  height: 21px;
  border: 1px solid #a8a8a8;
  border-radius: 50%;
  background: #2d2f31;
  color: #fff;
  text-align: center;
  font: 700 14px/19px ${UI};
`;

const YdTile = styled.div`
  width: 30px;
  height: 30px;
  border-radius: 5px;
  background: radial-gradient(circle at 60% 30%, #ff5a50, #f5102e 70%);
  color: #fff;
  text-align: center;
  font: 700 18px/27px ${UI};
  letter-spacing: -0.500px;
`;

const DuTile = styled.div`
  width: 20px;
  height: 20px;
  border-radius: 2px;
  background: linear-gradient(180deg, #0ab4fb, #0a8df5);
  color: #fff;
  text-align: center;
  font: italic 700 14px/20px ${UI};
  letter-spacing: -0.500px;
`;

const Weather = styled.div`
  width: 122px;
  margin: -2px 0 0 9px;
  display: flex;
  justify-content: space-between;
  font-size: 18px;
  letter-spacing: 0;
  white-space: nowrap;
`;

const Clock = styled.div`
  width: 98px;
  margin-left: 1px;
  text-align: center;
  font-size: 15.500px;
  line-height: 23px;
  letter-spacing: -0.050px;
`;

const Chrome = () => (
  <svg width="30" height="30" viewBox="0 0 30 30">
    <circle cx="15" cy="15" r="15" fill="#fcc31e" />
    <path d="M2 7.500A15 15 0 0 1 28 7.500H15L9 18.500z" fill="#e33b2e" />
    <path d="M2 7.500A15 15 0 0 0 14.500 30l6.700-11.500H8.800z" fill="#2aa24c" />
    <circle cx="15" cy="15" r="7.300" fill="#fff" /><circle cx="15" cy="15" r="5.700" fill="#3b7cec" />
  </svg>
);
const Crystal = () => (
  <svg width="21" height="28" viewBox="0 0 21 28">
    <path d="M11.500 0l6 5.500.5 8 3 6-4.500 8.500L6 26l-6-6.500L4 8z" fill="#7d50e2" />
    <path d="M11.500 0L4 8l-.5 6 2.500 4 8-3.500L15.500 6z" fill="#c3adfa" />
    <path d="M11.500 0l6 5.500.5 8-4 1L15.500 6z" fill="#9b78f0" />
    <path d="M0 19.500L3.500 14 6 18l2 5-2 3z" fill="#5a2fc0" />
    <path d="M6 18l8-3.500 4-1 3 6L12 23z" fill="#a583f5" />
    <path d="M8 23l4 0 9-3.500-4.500 8.500L6 26z" fill="#6435cc" />
  </svg>
);
const Cat = () => (
  <svg width="24" height="24" viewBox="0 0 24 24" fill="#173c68">
    <path d="M6 0l4 4h7l4-4 1 10-2 4 2 10H7Q0 24 0 20t3-1v2l3 1 1-8-2-4z" /><circle cx="11" cy="8.500" r="1" fill="#fff" /><circle cx="17" cy="8.500" r="1" fill="#fff" />
  </svg>
);
const FolderApp = () => (
  <svg width="28" height="24" viewBox="0 0 28 24">
    <path d="M0 1q0-1 1-1h10l2 3H0z" fill="#e2a009" /><path d="M0 4h12l2-2h14v21H0z" fill="#fbd15c" />
    <path d="M5 24V14q0-2 2-2h14q2 0 2 2v10h-5v-5h-8v5z" fill="#3c96dc" />
  </svg>
);
const CloudSun = () => (
  <svg width="31" height="30" viewBox="0 0 31 30">
    <circle cx="14" cy="16" r="12.500" fill="#f59322" />
    <path d="M0 9q0-4 4-4 2-5 7-4 4 1 4 5 3 1 2 5H2q-2 0-2-2zM12 25q0-4 4-4 2-4 6-3 4 1 4 4 4 0 4 3t-3 3H15q-3 0-3-3z" fill="#c5d7f5" />
    <circle cx="23" cy="8" r="7.500" fill="#cf2a20" />
    <text x="23" y="12.300" fontSize="12" fill="#fff" textAnchor="middle" fontFamily="Open Sans">1</text>
  </svg>
);

const ribbonTop = [
  <FileFindGlyph />, <GitFork size={22} strokeWidth={1.7} />, <LayoutDashboard size={22} strokeWidth={1.7} />,
  <Files size={22} strokeWidth={1.7} />, <TerminalGlyph />, '<%', <Calendar size={22} strokeWidth={1.7} />, <HypothesisGlyph />,
  <SketchGlyph />, <BulbGlyph />, <PanelsTopLeft size={22} strokeWidth={1.7} />,
];

export default function App() {
  return (
    <Screen>
      <Global />
      <TitleBar>
        <TitleLeft>
          <Slot $w={54} $c="#6b6865"><PanelIcon /></Slot>
          <Slot $w={43} $ml={11} $h={31} $bg="#2a2725" $r={5} $c="#8a8784"><FolderClosed size={22} strokeWidth={1.7} /></Slot>
          <Slot $w={50} $c="#5f5c59"><List size={22} strokeWidth={1.7} /></Slot>
          <Slot $w={42} $c="#6b6865"><Search size={21} strokeWidth={1.7} /></Slot>
          <Slot $w={50} $c="#6b6865"><Bookmark size={22} strokeWidth={1.7} /></Slot>
        </TitleLeft>
        <Tabs>
          <Tab $w={263} $pad={24}>Obsidian工作流</Tab>
          <Tab $w={250} $pad={11} $active>
            <File size={18} strokeWidth={1.8} />
            <TabLabel>Test-本地附件链接</TabLabel>
            <Slot $w={40}><X size={17} strokeWidth={1.8} /></Slot>
          </Tab>
          <Tab $w={253} $pad={11}>新标签页</Tab>
          <Slot $w={40} $h={46}><Plus size={19} strokeWidth={1.7} /></Slot>
          <Spacer />
          <Slot $w={40} $h={49}><ChevronDown size={17} strokeWidth={1.8} /></Slot>
          <Slot $w={40} $h={49}><PanelIcon flip s={22} /></Slot>
        </Tabs>
        <WindowControls>
          <Slot $w={52}><svg width="10" height="2"><rect width="10" height="2" fill="#cfcfcf" /></svg></Slot>
          <Slot $w={52}><svg width="13" height="12"><rect x="1" y="1" width="11" height="10" fill="none" stroke="#e0e0e0" strokeWidth="1.4" /></svg></Slot>
          <Slot $w={53}><svg width="12" height="12" stroke="#e0e0e0" strokeWidth="1.4"><path d="M1 1l10 10M11 1L1 11" /></svg></Slot>
        </WindowControls>
      </TitleBar>

      <Workspace>
        <LeftDock>
          <Ribbon>
            {ribbonTop.map((g, i) => <RibbonButton key={i}>{g}</RibbonButton>)}
            <Spacer />
            <RibbonButton><VaultGlyph /></RibbonButton>
            <RibbonButton><CircleHelp size={22} strokeWidth={1.7} /></RibbonButton>
            <RibbonButton><Settings size={22} strokeWidth={1.7} /></RibbonButton>
          </Ribbon>
          <Explorer>
            <ExplorerTools>
              <Slot $w={40}><SquarePen size={22} strokeWidth={1.7} /></Slot>
              <Slot $w={41}><FolderPlus size={22} strokeWidth={1.7} /></Slot>
              <Slot $w={40}><SortGlyph /></Slot>
              <Slot $w={40}><CollapseGlyph /></Slot>
            </ExplorerTools>
            <ExplorerBody>
              <Tree>
                <ClippedRow $depth={0}><Chevron /><Slot $w={21} />学习报名信息</ClippedRow>
                <FirstGroup>
                  <TreeNode depth={1} node={{ name: '预报名表格@空卡', pdf: true }} />
                  <TreeNode depth={1} node={{ name: 'PDF_443996949', pdf: true }} />
                </FirstGroup>
                {tree.map(n => <TreeNode key={n.name} node={n} depth={0} />)}
              </Tree>
              <ExplorerScroll />
            </ExplorerBody>
          </Explorer>
        </LeftDock>

        <MainPane>
          <ViewHeader>
            <Slot $w={36} $ml={15}><ArrowLeft size={19} strokeWidth={1.6} /></Slot>
            <Slot $w={34}><ArrowRight size={19} strokeWidth={1.6} /></Slot>
            <Slot $w={857} />
            <Crumbs>Pub<i>/</i>PDF-Annotator<i>/</i><b>Test-本地附件链接</b></Crumbs>
            <Spacer />
            <Slot $w={40} $c="#b0b0b0"><MoreVertical size={20} strokeWidth={1.8} /></Slot>
            <Slot $w={13} />
          </ViewHeader>

          <PaneBody>
            <PdfApp>
              <PdfToolbar>
                <Slot $w={35} $ml={3} $h={35} $bg="#ababad" $r={2}>
                  <svg width="20" height="18" viewBox="0 0 20 18" fill="none" stroke="#38383a" strokeWidth="2"><rect x="1" y="1" width="18" height="16" rx="2.500" /><path d="M10 1v16" strokeWidth="1.400" /><path d="M3.500 5h3.500M4.500 8h2.500M3.500 11h3.500" strokeWidth="1.200" /></svg>
                </Slot>
                <Slot $w={36} $ml={39}><Search size={22} strokeWidth={2.8} /></Slot>
                <Slot $w={38} $ml={2}><ArrowUp size={25} strokeWidth={2.4} /></Slot>
                <Divider $h={25} $ml={-1} />
                <Slot $w={35} $c="#9b9b9d"><ArrowDown size={25} strokeWidth={2.4} /></Slot>
                <PageInput>4</PageInput>
                <PageCount>/ 4</PageCount>
                <Slot $w={36} $ml={355}><Minus size={21} strokeWidth={3} /></Slot>
                <Divider $h={25} $ml={1} />
                <Slot $w={35}><Plus size={23} strokeWidth={2.800} /></Slot>
                <ZoomSelect>适合页宽<ChevronDown size={14} strokeWidth={3.400} /></ZoomSelect>
                <Spacer />
                <Slot $w={38}><Glyph d={PRESENT} fill /></Slot>
                <Slot $w={37}><Glyph d={OPEN} /></Slot>
                <Slot $w={38}><Glyph d={PRINT} fill /></Slot>
                <Slot $w={37}><Glyph d={SAVE} /></Slot>
                <Slot $w={37}><Glyph d={FLAG} fill w={19} /></Slot>
                <Divider $h={28} $ml={3} />
                <Slot $w={41}><svg width="18" height="16" viewBox="0 0 18 16" fill="none" stroke="currentColor" strokeWidth="2.200"><path d="M1.500 1l7 7-7 7M9.500 1l7 7-7 7" /></svg></Slot>
              </PdfToolbar>
              <PdfBody>
                <ThumbPane>
                  <ThumbTools>
                    <Slot $w={35} $ml={3} $h={35} $bg="#ababad" $r={2}><GridGlyph /></Slot>
                    <Slot $w={37} $ml={2}><OutlineGlyph /></Slot>
                    <Slot $w={37}><Paperclip size={20} strokeWidth={2} /></Slot>
                    <Slot $w={38}><LayersGlyph /></Slot>
                  </ThumbTools>
                  <ThumbList>
                    {thumbs.map((t, i) => <Thumb key={i} data={t} selected={i === 3} />)}
                  </ThumbList>
                </ThumbPane>
                <Viewer>
                  <Document />
                  <ScrollTrack>
                    <svg width="10" height="5"><path d="M0 5l5-5 5 5z" fill="#505050" /></svg>
                    <Slot $w={1} $h={900} />
                    <ScrollThumb />
                    <Spacer />
                    <svg width="10" height="5"><path d="M0 0l5 5 5-5z" fill="#505050" /></svg>
                  </ScrollTrack>
                </Viewer>
              </PdfBody>
            </PdfApp>

            <NotesPane>
              <NotesTop>
                <Slot $w={34}><ChevronRight size={20} strokeWidth={2.600} color="#8e8e8e" /></Slot>
                <Spacer />
                <Slot $w={30}><Search size={22} strokeWidth={2.600} /></Slot>
                <Slot $w={30}>
                  <svg width="20" height="20" viewBox="0 0 20 20" fill="none" stroke="currentColor" strokeWidth="2.200"><path d="M1 6.500L6 1.500l5 5M6 2v9.500l3 1M9 14l5 5 5-5M14 18.500V9l-3-1" /></svg>
                </Slot>
                <Slot $w={30}>
                  <svg width="20" height="20" viewBox="0 0 20 20" fill="none" stroke="currentColor" strokeWidth="2.200"><path d="M1.200 12v6.800h17.600V12M10 14V2M5.500 6L10 1.500 14.500 6" /></svg>
                </Slot>
                <Slot $w={30}>
                  <svg width="14" height="20" viewBox="0 0 14 20" fill="none" stroke="currentColor" strokeWidth="2.400"><path d="M1.500 5.500q0-4 5.500-4t5.500 4-5.500 5v3.500" /><circle cx="7" cy="18" r="1" fill="currentColor" strokeWidth="1.600" /></svg>
                </Slot>
              </NotesTop>
              <NotesBody>
                <BucketBar>
                  <BarButton>
                    <svg width="21" height="16" viewBox="0 0 21 16" fill="none" stroke="currentColor" strokeWidth="2"><path d="M1 8q4-6.800 9.500-6.800T20 8q-4 6.800-9.500 6.800T1 8z" /><circle cx="10.500" cy="8" r="2.200" fill="currentColor" stroke="none" /></svg>
                  </BarButton>
                  <BarButton>
                    <svg width="20" height="20" viewBox="0 0 20 20" fill="none" stroke="currentColor" strokeWidth="2.200" strokeLinejoin="round"><path d="M1.200 1.200h17.600V11q-2 6-9 7.800H1.200zM9.500 18.500v-6h8.500" /></svg>
                  </BarButton>
                  <Bucket $mt={220}>2</Bucket>
                  <Bucket $mt={193}>1</Bucket>
                </BucketBar>
                <Threads>
                  <TabRow><b>Annotations</b><sup>3</sup><span>Page Notes</span></TabRow>
                  <Card $h={170}>
                    <When>1 hr ago</When>
                    <Author><i /><u>!</u></Author>
                    <Quote>仅需专项计划填写“退役大学生计划”者</Quote>
                    <CardActions />
                  </Card>
                  <Card $h={200}>
                    <When>1 hr ago</When>
                    <Quote>月”以入伍批准书批准年月为准，</Quote>
                    <Comment>测试一下</Comment>
                    <CardActions />
                  </Card>
                  <Card $h={222}>
                    <When>1 hr ago</When>
                    <Quote>退役年月”以退出现役证批准退役年月为准，“退役机关名称”<br />以退出现役证批准退役机关名称为</Quote>
                    <Comment>sss <u>2023-10-27</u></Comment>
                    <CardActions />
                  </Card>
                </Threads>
                <SideScroll />
              </NotesBody>
              <BottomScroll><svg width="5" height="10"><path d="M5 0v10L0 5z" fill="#a5a5a5" /></svg></BottomScroll>
            </NotesPane>
          </PaneBody>
        </MainPane>
      </Workspace>

      <Taskbar>
        <AppButton $w={60}>
          <svg width="20" height="20" viewBox="0 0 20 20" fill="#fff"><path d="M0 3l8.500-1.300v7.800H0zM9.500 1.500L20 0v9.500H9.500zM0 10.500h8.500v7.800L0 17zM9.500 10.500H20V20L9.500 18.500z" /></svg>
        </AppButton>
        <AppButton $w={60}>
          <svg width="29" height="29" viewBox="0 0 29 29" fill="none" stroke="#fff" strokeWidth="2.400"><circle cx="17.500" cy="11.500" r="10" /><path d="M10 18.500L1.500 27.500" strokeWidth="3" /></svg>
        </AppButton>
        <AppButton $w={60}>
          <svg width="21" height="20" viewBox="0 0 21 20" fill="none" stroke="#fff" strokeWidth="1.400"><path d="M1 0v3h12V0M1 20v-3h12v3M1 6h12v8H1zM18.500 0v6M18.500 11v9" /><path d="M18.500 6.500v4" strokeWidth="3" /></svg>
        </AppButton>
        <AppButton $w={68}>
          <svg width="30" height="26" viewBox="0 0 30 26"><path d="M0 13l5-5 9 9-4 8z" fill="#1b57b8" /><path d="M7 21L24 0l6 5-18 21z" fill="#3f9fee" /></svg>
          <CountBadge $x={39} $y={23}>1</CountBadge>
        </AppButton>
        <AppButton $w={51} $ml={3} $running><FolderApp /></AppButton>
        <AppButton $w={51} $ml={11} $running><Chrome /></AppButton>
        <AppButton $w={61} $ml={6} $active $running><Crystal /></AppButton>
        <AppButton $w={51} $ml={6} $running><Cat /></AppButton>
        <AppButton $w={51} $ml={11} $running><YdTile>yd</YdTile></AppButton>
        <Spacer />
        <CloudSun />
        <Weather><span>31°C</span><span>局部晴朗</span></Weather>
        <Slot $w={40} $ml={25}><ChevronUp size={22} strokeWidth={1.600} /></Slot>
        <Slot $w={40}>
          <svg width="21" height="21" viewBox="0 0 21 21" fill="none" stroke="#e6e6e6" strokeWidth="1.400"><path d="M1 3l18-2v17l-18-2zM7 8q3-4 6 0v-3M13 11q-3 4-6 0v3" /><circle cx="16" cy="16.500" r="4.500" fill="#2e72c0" stroke="none" /></svg>
        </Slot>
        <Slot $w={40}>
          <svg width="21" height="15" viewBox="0 0 21 15"><path d="M6 3h13v10H4V9" fill="none" stroke="#fff" strokeWidth="1.400" /><path d="M7.500 5H17.500v6.500h-10zM19.500 6h1.500v4h-1.500zM0 2h5v3q0 2-1.500 2v5h-1.500V7Q0 7 0 5zM1 0h1v2h-1zM3.500 0h1v2h-1z" fill="#fff" /></svg>
        </Slot>
        <Slot $w={40}>
          <svg width="17" height="17" viewBox="0 0 17 17" fill="none" strokeWidth="1.400"><path d="M1 16A15 15 0 0 1 16 2" stroke="#8b8d8e" /><path d="M5 16A11 11 0 0 1 16 6M8.500 16A8 8 0 0 1 16 9.500" stroke="#fff" /><circle cx="14.500" cy="14.500" r="2" fill="#fff" /></svg>
        </Slot>
        <Slot $w={38}>
          <svg width="21" height="18" viewBox="0 0 21 18" fill="none" stroke="#fff" strokeWidth="1.400"><path d="M1 6v6h3l4 4V2L4 6zM11 6q2 3 0 6" /><path d="M14 4q3.500 5 0 10M17 2q5 7 0 14" stroke="#85878a" /></svg>
        </Slot>
        <Slot $w={31}>英</Slot>
        <Slot $w={40}><DuTile>du</DuTile></Slot>
        <Clock>12:02<br />2023/10/27</Clock>
        <AppButton $w={50}>
          <svg width="20" height="19" viewBox="0 0 20 19"><path d="M0 0h20v16H9l-5 3v-3H0z" fill="#fff" /><path d="M4 4.500h12M4 8h12M4 11.500h12" stroke="#202325" strokeWidth="1.300" /></svg>
          <CountBadge $x={23} $y={24}>7</CountBadge>
        </AppButton>
        <Divider $h={50} $ml={8} />
        <Slot $w={5} />
      </Taskbar>

      <Overlay width="2560" height="1440" viewBox="0 0 2560 1440">
        <path d="M1757 1044L1983 806 1960 796 2031 770 2004 842 1996 820z" fill="none" stroke={ORANGE} strokeWidth="8.500" strokeLinejoin="round" />
      </Overlay>
      <Callout>
        <CalloutLine $ls={0.27}>比如在这里可以使用 [[双链]] 的形式关联 Obsidian其他文档</CalloutLine>
        <CalloutLine $ls={0.4}>然后在markdown编辑模式下，Ctrl+F 查找comment变量</CalloutLine>
        <CalloutLine $ls={0.1}>即可获取各个评论内容</CalloutLine>
      </Callout>
      <StatusBar>
        <StatusItem $w={37}><Check size={17} strokeWidth={1.600} /></StatusItem>
        <StatusItem $w={44}>main</StatusItem>
        <StatusItem $w={100}>0 条反向链接</StatusItem>
        <StatusItem $w={79}>1,051 个词</StatusItem>
        <StatusItem $w={101}>3,725 个字符</StatusItem>
        <svg width="15" height="18" viewBox="0 0 15 18" fill="none" stroke="currentColor" strokeWidth="1.500"><path d="M1 9h13v8H1zM3 5.500h9M4.500 2h6" /></svg>
      </StatusBar>
    </Screen>
  );
}
